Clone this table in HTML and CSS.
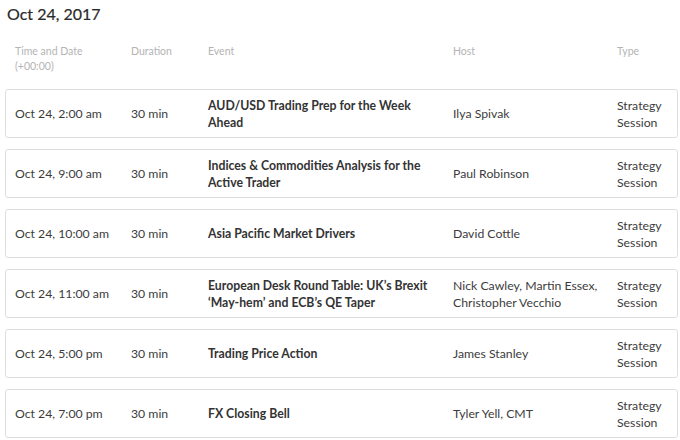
FILE: index.html
```html
<!DOCTYPE html>
<html>
<head>
<meta charset="utf-8">
<link rel="stylesheet" href="styles.css">
</head>
<body>
<div class="page">
  <h2 class="day">Oct 24, 2017</h2>
  <div class="grid head">
    <div>Time and Date<br>(+00:00)</div>
    <div>Duration</div>
    <div>Event</div>
    <div>Host</div>
    <div>Type</div>
  </div>
  <div class="list">
    <div class="grid row">
      <div>Oct 24, 2:00 am</div>
      <div>30 min</div>
      <div class="ev">AUD/USD Trading Prep for the Week Ahead</div>
      <div>Ilya Spivak</div>
      <div>Strategy<br>Session</div>
    </div>
    <div class="grid row">
      <div>Oct 24, 9:00 am</div>
      <div>30 min</div>
      <div class="ev">Indices &amp; Commodities Analysis for the Active Trader</div>
      <div>Paul Robinson</div>
      <div>Strategy<br>Session</div>
    </div>
    <div class="grid row">
      <div>Oct 24, 10:00 am</div>
      <div>30 min</div>
      <div class="ev">Asia Pacific Market Drivers</div>
      <div>David Cottle</div>
      <div>Strategy<br>Session</div>
    </div>
    <div class="grid row">
      <div>Oct 24, 11:00 am</div>
      <div>30 min</div>
      <div class="ev">European Desk Round Table: UK’s Brexit ‘May-hem’ and ECB’s QE Taper</div>
      <div>Nick Cawley, Martin Essex, Christopher Vecchio</div>
      <div>Strategy<br>Session</div>
    </div>
    <div class="grid row">
      <div>Oct 24, 5:00 pm</div>
      <div>30 min</div>
      <div class="ev">Trading Price Action</div>
      <div>James Stanley</div>
      <div>Strategy<br>Session</div>
    </div>
    <div class="grid row">
      <div>Oct 24, 7:00 pm</div>
      <div>30 min</div>
      <div class="ev">FX Closing Bell</div>
      <div>Tyler Yell, CMT</div>
      <div>Strategy<br>Session</div>
    </div>
  </div>
</div>
</body>
</html>
```
FILE: styles.css
```css
* { box-sizing: border-box; }
body {
  margin: 0;
  background: #fff;
  font-family: Lato, "Open Sans", sans-serif;
  color: #444;
}
.page {
  padding: 0 2px 0 5px;
}
.day {
  margin: 0 0 0 2px;
  padding-top: 3px;
  font-size: 16px;
  font-weight: 400;
  line-height: 22px;
  color: #2a2a2a;
  -webkit-text-stroke: 0.2px #2a2a2a;
}
.grid {
  display: grid;
  grid-template-columns: 116px 77px 245px 164px 1fr;
  align-items: center;
}
.grid > div {
  padding-right: 12px;
}
.head {
  margin-top: 19px;
  padding-left: 10px;
  font-size: 10.5px;
  line-height: 15px;
  color: #b4b4b4;
  align-items: start;
  height: 40px;
}
.list {
  display: flex;
  flex-direction: column;
  gap: 11px;
  margin-top: 5px;
}
.row {
  height: 49px;
  padding-left: 9px;
  border: 1px solid #dedede;
  border-radius: 3px;
  font-size: 12.25px;
  line-height: 17px;
  color: #3c3c3c;
}
.ev {
  font-weight: 700;
  color: #333;
}
```
